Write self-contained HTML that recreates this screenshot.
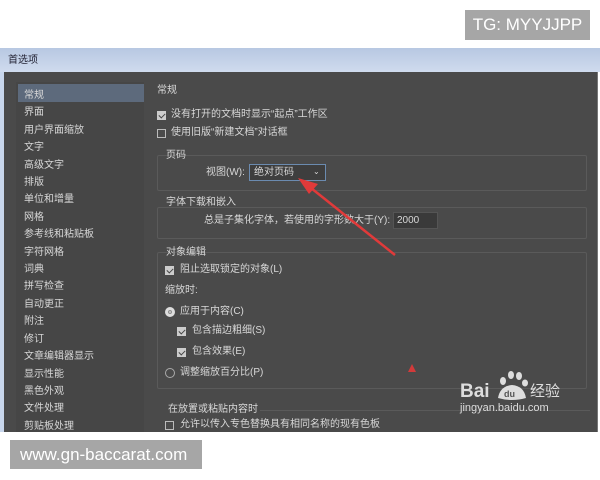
<!DOCTYPE html>
<html><head><meta charset="utf-8"><style>
*{margin:0;padding:0;box-sizing:border-box}
body{width:600px;height:480px;background:#fff;position:relative;overflow:hidden;font-family:"Liberation Sans","Noto Sans CJK SC",sans-serif}
.a{position:absolute}
.t{position:absolute;font-size:10px;color:#d8d8d8;white-space:nowrap;line-height:12px}
.cb{position:absolute;width:9px;height:9px;border:1px solid #bbb;background:#4b4b4b}
.cb.on{background:#ccc;border-color:#ccc}
.cb.on::after{content:"";position:absolute;left:2px;top:0px;width:3px;height:5px;border:solid #444;border-width:0 1.5px 1.5px 0;transform:rotate(45deg)}
.grp{position:absolute;border:1px solid #5a5a5a;border-radius:2px}
</style></head><body>
<div class="a" style="left:465px;top:10px;width:125px;height:30px;background:#a6a6a6;color:#fff;font-size:17px;line-height:30px;text-align:center">TG: MYYJJPP</div>
<div class="a" style="left:0;top:48px;width:598px;height:384px;background:#4a4a4a;border-right:1px solid #777"></div>
<div class="a" style="left:0;top:48px;width:600px;height:24px;background:linear-gradient(#b7c8e2,#cfdbee)"></div>
<div class="t" style="left:8px;top:55px;color:#223">首选项</div>
<div class="a" style="left:0;top:72px;width:4px;height:360px;background:#c8d6ec"></div>
<div class="a" style="left:16px;top:82px;width:128px;height:350px;background:#464646"></div>
<div class="a" style="left:18px;top:84px;width:126px;height:18px;background:#5d6a7c"></div>
<div class="t" style="left:24px;top:87px;line-height:17.4px">常规<br>界面<br>用户界面缩放<br>文字<br>高级文字<br>排版<br>单位和增量<br>网格<br>参考线和粘贴板<br>字符网格<br>词典<br>拼写检查<br>自动更正<br>附注<br>修订<br>文章编辑器显示<br>显示性能<br>黑色外观<br>文件处理<br>剪贴板处理</div>
<div class="t" style="left:157px;top:85px">常规</div>
<div class="cb on" style="left:157px;top:111px"></div><div class="t" style="left:171px;top:109px">没有打开的文档时显示“起点”工作区</div>
<div class="cb" style="left:157px;top:129px"></div><div class="t" style="left:171px;top:127px">使用旧版“新建文档”对话框</div>
<div class="grp" style="left:157px;top:155px;width:430px;height:36px"></div>
<div class="t" style="left:166px;top:150px">页码</div>
<div class="t" style="left:206px;top:167px">视图(W):</div>
<div class="a" style="left:249px;top:164px;width:77px;height:17px;border:1px solid #6b8bb0;background:#3e3e3e"></div>
<div class="t" style="left:254px;top:167px">绝对页码</div>
<div class="t" style="left:313px;top:166px;font-size:8px">⌄</div>
<div class="grp" style="left:157px;top:207px;width:430px;height:32px"></div>
<div class="t" style="left:166px;top:197px">字体下载和嵌入</div>
<div class="t" style="left:204px;top:215px">总是子集化字体，若使用的字形数大于(Y):</div>
<div class="a" style="left:393px;top:212px;width:45px;height:17px;background:#3a3a3a;border:1px solid #555"></div>
<div class="t" style="left:397px;top:215px">2000</div>
<div class="grp" style="left:157px;top:252px;width:430px;height:137px"></div>
<div class="t" style="left:166px;top:247px">对象编辑</div>
<div class="cb on" style="left:165px;top:266px"></div><div class="t" style="left:180px;top:264px">阻止选取锁定的对象(L)</div>
<div class="t" style="left:165px;top:285px">缩放时:</div>
<div class="a" style="left:165px;top:307px;width:10px;height:10px;border-radius:50%;background:#ccc;border:3px solid #ddd;box-shadow:inset 0 0 0 1px #888"></div><div class="t" style="left:180px;top:306px">应用于内容(C)</div>
<div class="cb on" style="left:177px;top:327px"></div><div class="t" style="left:192px;top:325px">包含描边粗细(S)</div>
<div class="cb on" style="left:177px;top:348px"></div><div class="t" style="left:192px;top:346px">包含效果(E)</div>
<div class="a" style="left:165px;top:368px;width:10px;height:10px;border-radius:50%;border:1px solid #aaa"></div><div class="t" style="left:180px;top:367px">调整缩放百分比(P)</div>
<div class="t" style="left:168px;top:404px">在放置或粘贴内容时</div>
<div class="a" style="left:260px;top:410px;width:330px;height:1px;background:#5a5a5a"></div>
<div class="cb" style="left:165px;top:421px"></div><div class="t" style="left:180px;top:419px">允许以传入专色替换具有相同名称的现有色板</div>
<svg class="a" style="left:0;top:0" width="600" height="480">
<line x1="395" y1="255" x2="306" y2="184" stroke="#e03a3a" stroke-width="2.5"/>
<polygon points="298,178 318,184 309,194" fill="#e03a3a"/>
<polygon points="412,364 416,372 408,372" fill="#d23a3a"/>
<g fill="#ddd"><ellipse cx="503" cy="381" rx="3" ry="4"/><ellipse cx="511" cy="375" rx="3" ry="4"/><ellipse cx="519" cy="376" rx="3" ry="4"/><ellipse cx="525" cy="383" rx="3" ry="3.5"/><path d="M498 398 Q500 386 512 385 Q524 386 526 398 Q512 402 498 398Z"/></g>
<text x="504" y="397" font-size="9" fill="#555" font-family="Liberation Sans" font-weight="bold">du</text>
</svg>
<div class="t" style="left:460px;top:382px;font-size:19px;font-weight:bold;color:#ddd;line-height:20px">Bai</div>
<div class="t" style="left:530px;top:383px;font-size:15px;color:#ddd;line-height:18px">经验</div>
<div class="t" style="left:460px;top:402px;font-size:11px;color:#ddd">jingyan.baidu.com</div>
<div class="a" style="left:10px;top:440px;width:192px;height:29px;background:#a6a6a6;color:#fff;font-size:17px;line-height:29px;padding-left:10px">www.gn-baccarat.com</div>
</body></html>
